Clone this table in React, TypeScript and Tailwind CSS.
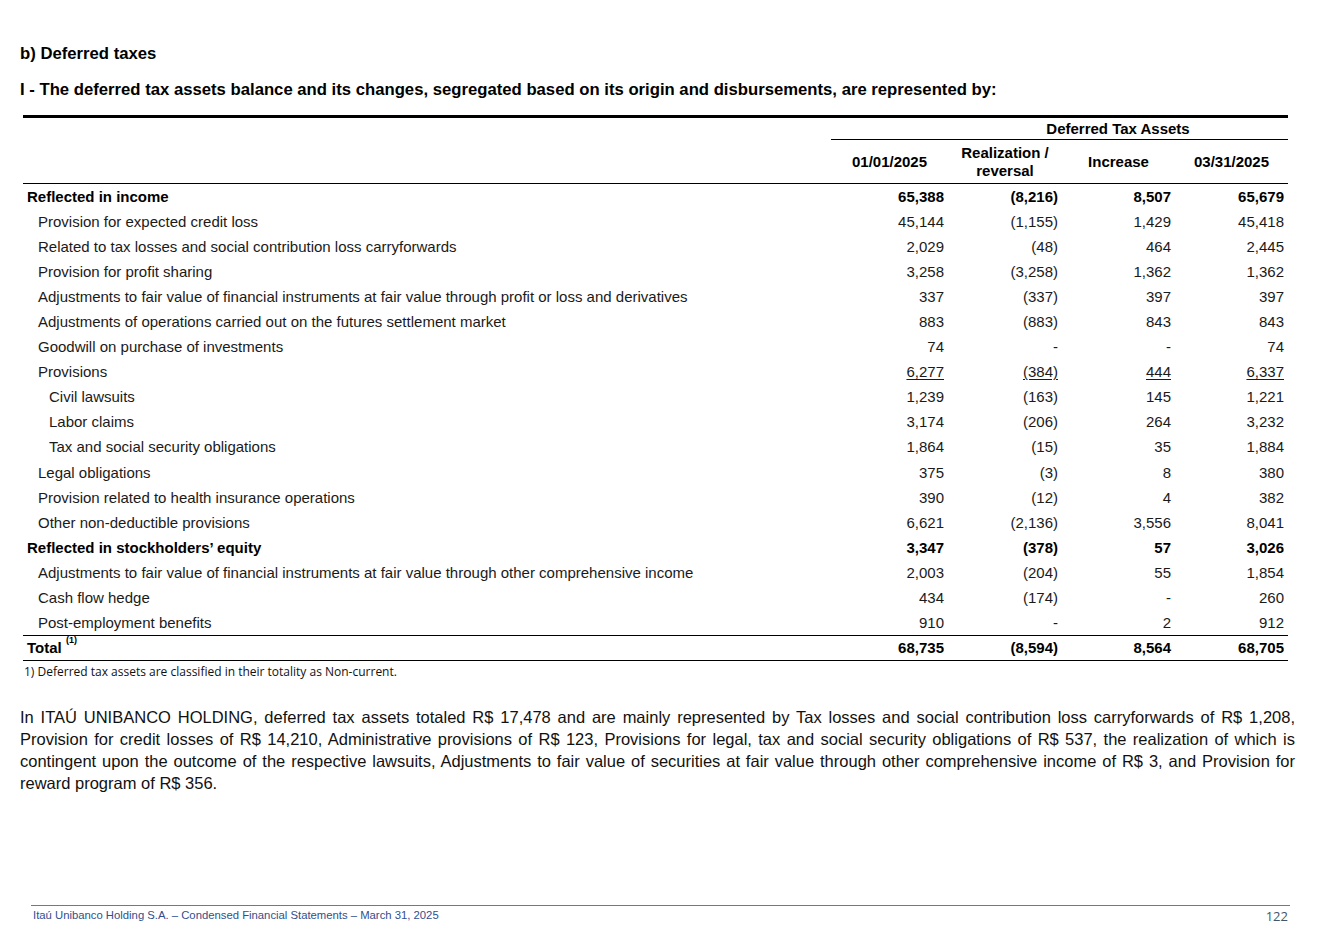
import React from 'react';

type Row = {
  label: string;
  level: 0 | 1 | 2;
  bold?: boolean;
  underline?: boolean;
  values: [string, string, string, string];
};

const rows: Row[] = [
  { label: 'Reflected in income', level: 0, bold: true, values: ['65,388', '(8,216)', '8,507', '65,679'] },
  { label: 'Provision for expected credit loss', level: 1, values: ['45,144', '(1,155)', '1,429', '45,418'] },
  { label: 'Related to tax losses and social contribution loss carryforwards', level: 1, values: ['2,029', '(48)', '464', '2,445'] },
  { label: 'Provision for profit sharing', level: 1, values: ['3,258', '(3,258)', '1,362', '1,362'] },
  { label: 'Adjustments to fair value of financial instruments at fair value through profit or loss and derivatives', level: 1, values: ['337', '(337)', '397', '397'] },
  { label: 'Adjustments of operations carried out on the futures settlement market', level: 1, values: ['883', '(883)', '843', '843'] },
  { label: 'Goodwill on purchase of investments', level: 1, values: ['74', '-', '-', '74'] },
  { label: 'Provisions', level: 1, underline: true, values: ['6,277', '(384)', '444', '6,337'] },
  { label: 'Civil lawsuits', level: 2, values: ['1,239', '(163)', '145', '1,221'] },
  { label: 'Labor claims', level: 2, values: ['3,174', '(206)', '264', '3,232'] },
  { label: 'Tax and social security obligations', level: 2, values: ['1,864', '(15)', '35', '1,884'] },
  { label: 'Legal obligations', level: 1, values: ['375', '(3)', '8', '380'] },
  { label: 'Provision related to health insurance operations', level: 1, values: ['390', '(12)', '4', '382'] },
  { label: 'Other non-deductible provisions', level: 1, values: ['6,621', '(2,136)', '3,556', '8,041'] },
  { label: 'Reflected in stockholders’ equity', level: 0, bold: true, values: ['3,347', '(378)', '57', '3,026'] },
  { label: 'Adjustments to fair value of financial instruments at fair value through other comprehensive income', level: 1, values: ['2,003', '(204)', '55', '1,854'] },
  { label: 'Cash flow hedge', level: 1, values: ['434', '(174)', '-', '260'] },
  { label: 'Post-employment benefits', level: 1, values: ['910', '-', '2', '912'] },
];

const indent = ['pl-[4px]', 'pl-[15px]', 'pl-[26px]'];

export default function App() {
  return (
    <div className="w-[1317px] h-[948px] bg-white text-black font-['Liberation_Sans',Arial,sans-serif] flex flex-col">
      <div className="pl-[20px] pt-[44px]">
        <h2 className="text-[16.7px] font-bold leading-[19px]">b) Deferred taxes</h2>
        <h3 className="text-[16.7px] font-bold leading-[19px] mt-[17px]">
          I - The deferred tax assets balance and its changes, segregated based on its origin and disbursements, are represented by:
        </h3>
      </div>

      <div className="ml-[23px] w-[1265px] mt-[16px]">
        <table className="w-full border-collapse text-[15px] leading-[17px]">
          <colgroup>
            <col className="w-[808px]" />
            <col className="w-[117px]" />
            <col className="w-[114px]" />
            <col className="w-[113px]" />
            <col className="w-[113px]" />
          </colgroup>
          <thead>
            <tr className="border-t-[3px] border-black">
              <th className="h-[23px]" />
              <th colSpan={4} className="h-[23px] font-bold text-center pl-[117px] border-b border-black align-middle">
                Deferred Tax Assets
              </th>
            </tr>
            <tr className="border-b border-black">
              <th className="h-[44px]" />
              <th className="font-bold text-center align-middle">01/01/2025</th>
              <th className="font-bold text-center align-middle leading-[18px]">
                Realization /<br />reversal
              </th>
              <th className="font-bold text-center align-middle">Increase</th>
              <th className="font-bold text-center align-middle">03/31/2025</th>
            </tr>
          </thead>
          <tbody>
            {rows.map((r, i) => (
              <tr key={i} className={r.bold ? 'font-bold' : 'text-[#1a1a1a]'}>
                <td className={`h-[25.1px] align-middle whitespace-nowrap ${indent[r.level]}`}>{r.label}</td>
                {r.values.map((v, j) => (
                  <td key={j} className="text-right pr-[4px] align-middle">
                    <span className={r.underline ? 'underline underline-offset-[2px]' : ''}>{v}</span>
                  </td>
                ))}
              </tr>
            ))}
            <tr className="border-y border-black font-bold">
              <td className="h-[25px] pl-[4px] align-middle">
                Total <sup className="text-[9px] font-bold align-super">(1)</sup>
              </td>
              <td className="text-right pr-[4px] align-middle">68,735</td>
              <td className="text-right pr-[4px] align-middle">(8,594)</td>
              <td className="text-right pr-[4px] align-middle">8,564</td>
              <td className="text-right pr-[4px] align-middle">68,705</td>
            </tr>
          </tbody>
        </table>
        <p className="font-['Open_Sans',sans-serif] text-[12px] leading-[16px] mt-[3px] pl-[1px] text-[#111]">
          1) Deferred tax assets are classified in their totality as Non-current.
        </p>
      </div>

      <p className="ml-[20px] w-[1275px] mt-[26px] text-[16.5px] leading-[22px] text-justify text-[#111]">
        In ITAÚ UNIBANCO HOLDING, deferred tax assets totaled R$ 17,478 and are mainly represented by Tax losses and social contribution loss carryforwards of R$ 1,208, Provision for credit losses of R$ 14,210, Administrative provisions of R$ 123, Provisions for legal, tax and social security obligations of R$ 537, the realization of which is contingent upon the outcome of the respective lawsuits, Adjustments to fair value of securities at fair value through other comprehensive income of R$ 3, and Provision for reward program of R$ 356.
      </p>

      <footer className="mt-auto mb-[24px] ml-[31px] w-[1259px] border-t border-[#5b7bb5] flex justify-between items-start">
        <span className="text-[11.3px] leading-[14px] pt-[2px] pl-[2px] text-[#2f4f8f]">
          Itaú Unibanco Holding S.A. – Condensed Financial Statements – March 31, 2025
        </span>
        <span className="font-['Open_Sans',sans-serif] text-[13px] leading-[16px] pt-[2px] pr-[2px] text-[#44546a]">122</span>
      </footer>
    </div>
  );
}
